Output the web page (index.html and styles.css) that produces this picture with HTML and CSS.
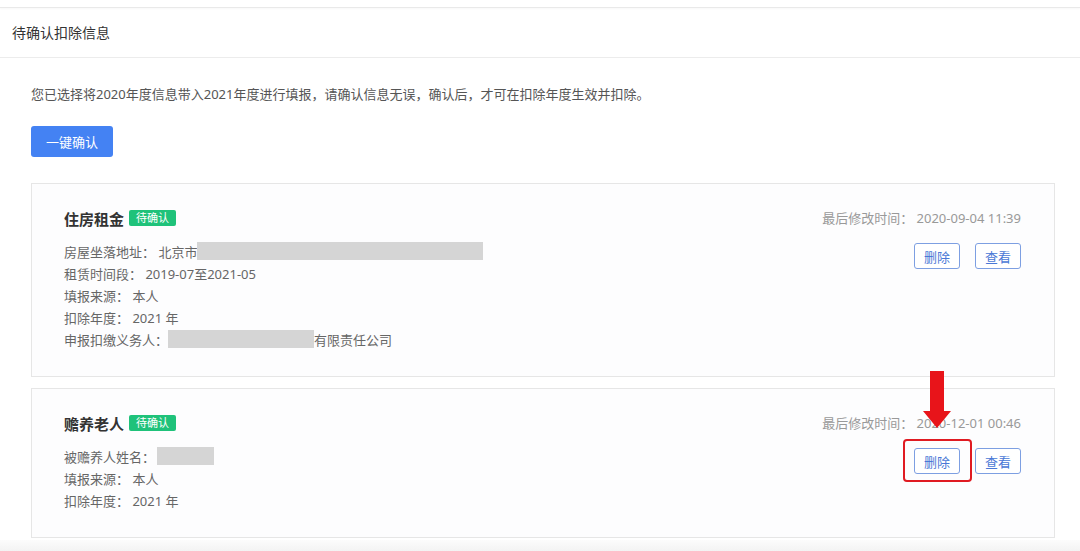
FILE: index.html
```html
<!DOCTYPE html>
<html lang="zh-CN">
<head>
<meta charset="utf-8">
<title>待确认扣除信息</title>
<link rel="stylesheet" href="styles.css">
</head>
<body>
<div class="topbar"></div>
<div class="header">待确认扣除信息</div>
<div class="content">
  <p class="notice">您已选择将2020年度信息带入2021年度进行填报，请确认信息无误，确认后，才可在扣除年度生效并扣除。</p>
  <button class="btn-primary">一键确认</button>

  <div class="card card-first">
    <div class="card-main">
      <div class="card-title">住房租金<span class="badge">待确认</span></div>
      <div class="info">
        <div class="row">房屋坐落地址：&nbsp;北京市<span class="mask mask-addr"></span></div>
        <div class="row">租赁时间段：&nbsp;2019-07至2021-05</div>
        <div class="row">填报来源：&nbsp;本人</div>
        <div class="row">扣除年度：&nbsp;2021 年</div>
        <div class="row">申报扣缴义务人：<span class="mask mask-company"></span>有限责任公司</div>
      </div>
    </div>
    <div class="card-side">
      <div class="time">最后修改时间：&nbsp;2020-09-04 11:39</div>
      <div class="actions">
        <button class="btn-outline">删除</button>
        <button class="btn-outline">查看</button>
      </div>
    </div>
  </div>

  <div class="card">
    <div class="card-main">
      <div class="card-title">赡养老人<span class="badge">待确认</span></div>
      <div class="info">
        <div class="row">被赡养人姓名：<span class="mask mask-name"></span></div>
        <div class="row">填报来源：&nbsp;本人</div>
        <div class="row">扣除年度：&nbsp;2021 年</div>
      </div>
    </div>
    <div class="card-side">
      <div class="time">最后修改时间：&nbsp;2020-12-01 00:46</div>
      <div class="actions">
        <span class="highlight">
          <svg class="arrow" width="28" height="57" viewBox="0 0 28 57"><path d="M7 0 H21 V40 H28 L14 57 L0 40 H7 Z" fill="#e8141a"/></svg>
          <button class="btn-outline">删除</button>
          <span class="ring"></span>
        </span>
        <button class="btn-outline">查看</button>
      </div>
    </div>
  </div>
</div>
<div class="footer-shade"></div>
</body>
</html>
```

FILE: styles.css
```css
* { box-sizing: border-box; }
html, body { margin: 0; padding: 0; background: #fff; }
body {
  font-family: "Noto Sans", "Noto Sans CJK SC", sans-serif;
  color: #555;
  font-size: 13px;
  width: 1080px;
  height: 551px;
  overflow: hidden;
}
.topbar {
  height: 8px;
  border-bottom: 1px solid #e9e9e9;
  box-shadow: 0 1px 2px rgba(0,0,0,0.03);
}
.header {
  height: 50px;
  line-height: 49px;
  padding-left: 12px;
  font-size: 14px;
  color: #333;
  border-bottom: 1px solid #ececec;
}
.content {
  padding: 0 25px 0 31px;
}
.notice {
  margin: 26px 0 0 0;
  line-height: 20px;
  font-size: 13px;
  color: #555;
}
.btn-primary {
  display: block;
  margin-top: 22px;
  width: 82px;
  height: 31px;
  border: none;
  border-radius: 3px;
  background: #4482f3;
  color: #fff;
  font-family: inherit;
  font-size: 13px;
  padding: 0;
}
.card {
  display: flex;
  justify-content: space-between;
  margin-top: 11px;
  border: 1px solid #e6e6e6;
  background: #fdfdfe;
  padding: 23px 33px 26px 32px;
}
.card-first {
  margin-top: 26px;
  padding-bottom: 26px;
}
.card-title {
  display: flex;
  align-items: center;
  height: 22px;
  font-size: 15px;
  font-weight: bold;
  color: #333;
}
.badge {
  display: inline-block;
  margin-left: 5px;
  width: 47px;
  height: 16px;
  line-height: 16px;
  text-align: center;
  background: #1fc27a;
  color: #fff;
  font-size: 11px;
  font-weight: normal;
  border-radius: 2px;
}
.info { margin-top: 11px; }
.row {
  display: flex;
  align-items: center;
  height: 22px;
  color: #666;
  white-space: pre;
}
.mask {
  display: inline-block;
  height: 18px;
  background: #d5d5d5;
}
.mask-addr { width: 286px; }
.mask-company { width: 146px; }
.mask-name { width: 57px; margin-left: 2px; }
.card-side {
  display: flex;
  flex-direction: column;
  align-items: flex-end;
}
.time {
  line-height: 22px;
  color: #999;
  white-space: pre;
}
.actions {
  display: flex;
  gap: 15px;
  margin-top: 14px;
}
.btn-outline {
  width: 46px;
  height: 26px;
  padding: 0;
  border: 1px solid #7d9fe2;
  border-radius: 3px;
  background: #fff;
  color: #4a78d6;
  font-family: inherit;
  font-size: 13px;
}
.highlight {
  position: relative;
  display: inline-block;
  height: 26px;
}
.highlight .btn-outline { display: block; }
.ring {
  position: absolute;
  left: -11px;
  right: -12px;
  top: -9px;
  bottom: -8px;
  border: 2px solid #e01b22;
  border-radius: 4px;
}
.arrow {
  position: absolute;
  left: 9px;
  top: -77px;
}
.footer-shade {
  margin-top: 2px;
  height: 20px;
  background: linear-gradient(to bottom, #fcfcfc, #ececec);
}
```
